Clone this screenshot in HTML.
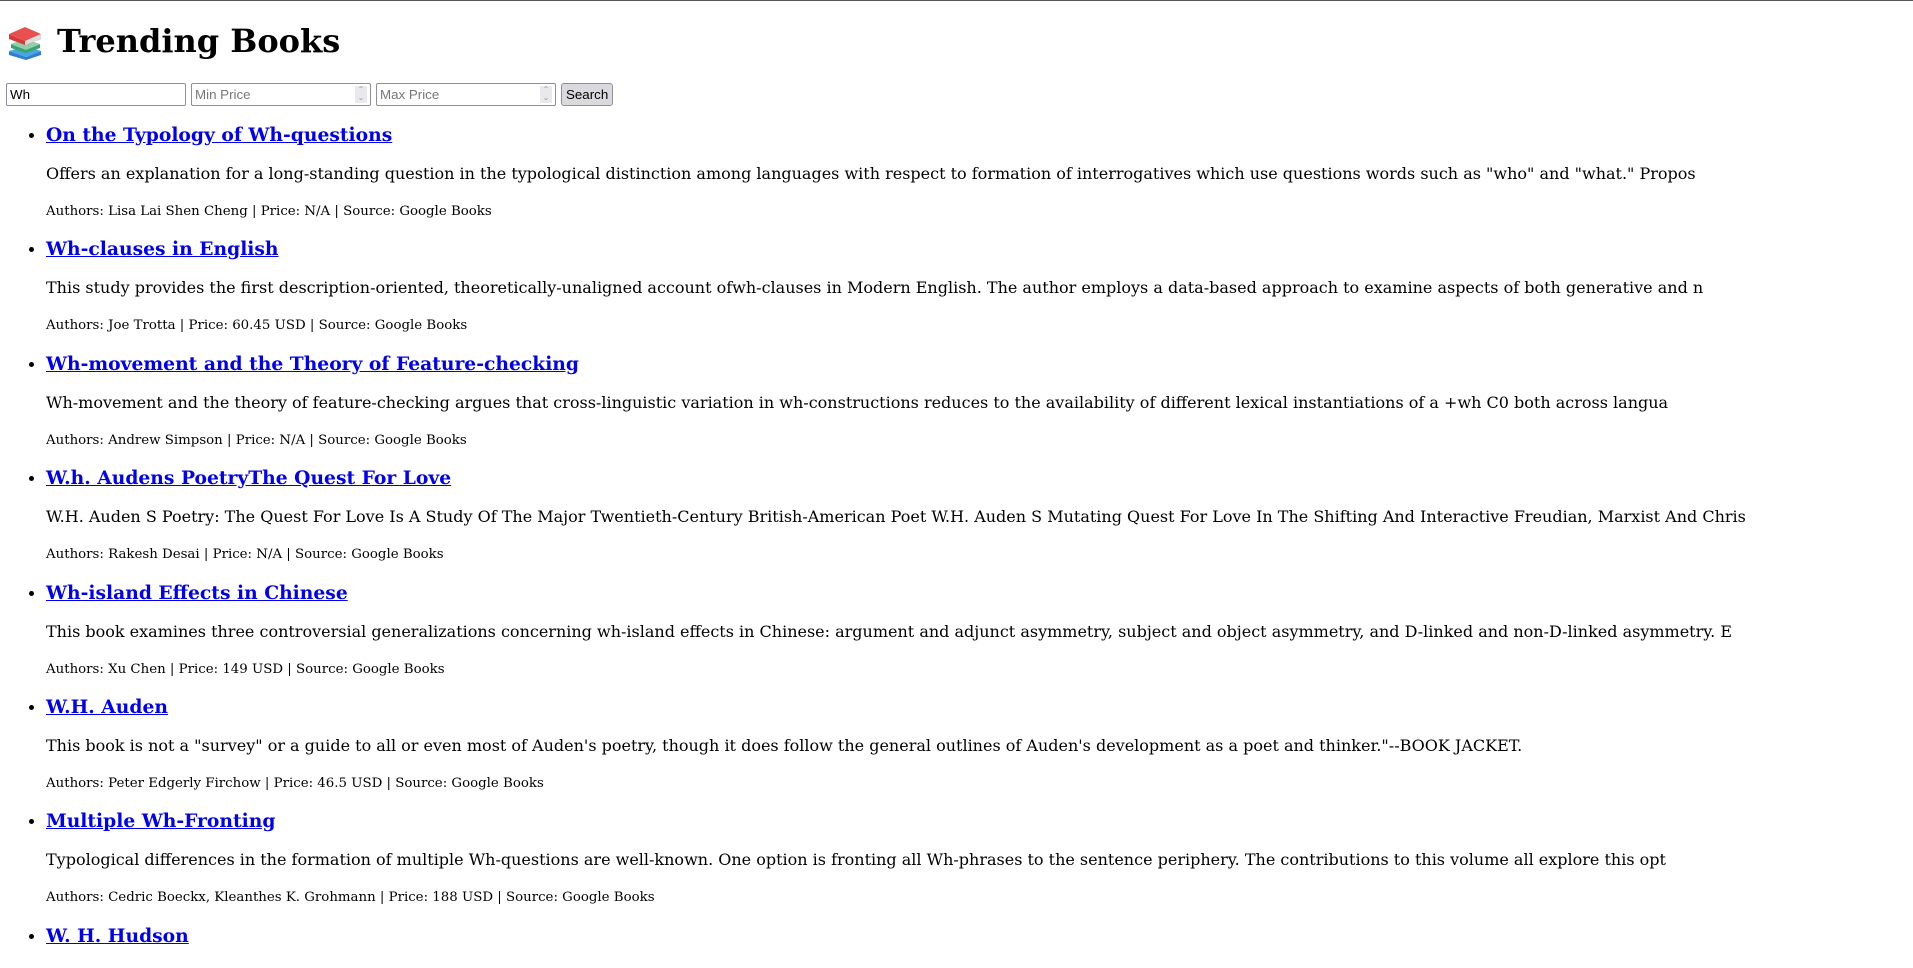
<!DOCTYPE html>
<html><head><meta charset="utf-8"><style>
html,body{margin:0;padding:0;background:#fff;}
body{width:1913px;height:968px;overflow:hidden;border-top:1px solid #555;box-sizing:border-box;font-family:"DejaVu Serif","Liberation Serif",serif;color:#000;}
.hdr{position:absolute;left:6px;top:23px;height:37px;display:flex;align-items:center;}
.hdr svg{width:38px;height:36px;}
h1{margin:0 0 0 13px;font-size:32px;line-height:37px;font-weight:bold;}
.form{position:absolute;top:83px;left:6px;display:flex;font-family:"Liberation Sans","DejaVu Sans",sans-serif;font-size:13.33px;}
.inp{box-sizing:border-box;height:23px;border:1px solid #8f8f9d;border-radius:2px;width:180px;margin-right:5px;padding:3px 3px 2px;line-height:16px;position:relative;color:#000;}
.ph{color:#777;}
.spin{position:absolute;right:3px;top:2px;width:12px;height:17px;background:#e9e9ed;color:#999;font-size:8px;line-height:8px;text-align:center;}
.btn{box-sizing:border-box;height:23px;border:1px solid #8f8f9d;border-radius:3px;background:#d9d9de;padding:3px 4px 2px;line-height:16px;}
ul{position:absolute;top:124px;left:0;margin:0;padding:0 0 0 46px;list-style:disc;}
li{margin:0;}
li::marker{font-size:17px;}
h3{margin:0 0 18px;font-size:18.72px;line-height:22px;font-weight:bold;}
h3 a{color:#0000ee;text-decoration:underline;}
p.d{margin:0 0 21px;font-size:16px;line-height:19px;white-space:nowrap;}
p.a{margin:0 0 18.4px;font-size:13.33px;line-height:16px;}
</style></head><body>
<div class="hdr"><svg viewBox="0 0 38 36">
<path d="M3 27 L20 33 L35 27 L35 31 L20 36 L3 31Z" fill="#2f7fc8"/>
<path d="M3 27 L20 33 L35 27 L20 22Z" fill="#4aa3e8"/>
<path d="M5 20 L20 26 L34 20 L34 24 L20 29 L5 24Z" fill="#3aa56a"/>
<path d="M5 20 L20 26 L34 20 L19 15Z" fill="#8fd0a8"/>
<path d="M3 10 L19 17 L35 10 L35 15 L19 21 L3 15Z" fill="#d63a3a"/>
<path d="M3 10 L19 17 L35 10 L19 3Z" fill="#e85050"/>
<path d="M19 17 L35 10 L35 15 L19 21Z" fill="#ddd"/>
</svg><h1>Trending Books</h1></div>
<div class="form">
<div class="inp">Wh</div>
<div class="inp"><span class="ph">Min Price</span><div class="spin">⌃<br>⌄</div></div>
<div class="inp"><span class="ph">Max Price</span><div class="spin">⌃<br>⌄</div></div>
<div class="btn">Search</div>
</div>
<ul>
<li><h3><a>On the Typology of Wh-questions</a></h3><p class="d">Offers an explanation for a long-standing question in the typological distinction among languages with respect to formation of interrogatives which use questions words such as "who" and "what." Propos</p><p class="a">Authors: Lisa Lai Shen Cheng | Price: N/A | Source: Google Books</p></li>
<li><h3><a>Wh-clauses in English</a></h3><p class="d">This study provides the first description-oriented, theoretically-unaligned account ofwh-clauses in Modern English. The author employs a data-based approach to examine aspects of both generative and n</p><p class="a">Authors: Joe Trotta | Price: 60.45 USD | Source: Google Books</p></li>
<li><h3><a>Wh-movement and the Theory of Feature-checking</a></h3><p class="d">Wh-movement and the theory of feature-checking argues that cross-linguistic variation in wh-constructions reduces to the availability of different lexical instantiations of a +wh C0 both across langua</p><p class="a">Authors: Andrew Simpson | Price: N/A | Source: Google Books</p></li>
<li><h3><a>W.h. Audens PoetryThe Quest For Love</a></h3><p class="d">W.H. Auden S Poetry: The Quest For Love Is A Study Of The Major Twentieth-Century British-American Poet W.H. Auden S Mutating Quest For Love In The Shifting And Interactive Freudian, Marxist And Chris</p><p class="a">Authors: Rakesh Desai | Price: N/A | Source: Google Books</p></li>
<li><h3><a>Wh-island Effects in Chinese</a></h3><p class="d">This book examines three controversial generalizations concerning wh-island effects in Chinese: argument and adjunct asymmetry, subject and object asymmetry, and D-linked and non-D-linked asymmetry. E</p><p class="a">Authors: Xu Chen | Price: 149 USD | Source: Google Books</p></li>
<li><h3><a>W.H. Auden</a></h3><p class="d">This book is not a "survey" or a guide to all or even most of Auden's poetry, though it does follow the general outlines of Auden's development as a poet and thinker."--BOOK JACKET.</p><p class="a">Authors: Peter Edgerly Firchow | Price: 46.5 USD | Source: Google Books</p></li>
<li><h3><a>Multiple Wh-Fronting</a></h3><p class="d">Typological differences in the formation of multiple Wh-questions are well-known. One option is fronting all Wh-phrases to the sentence periphery. The contributions to this volume all explore this opt</p><p class="a">Authors: Cedric Boeckx, Kleanthes K. Grohmann | Price: 188 USD | Source: Google Books</p></li>
<li><h3><a>W. H. Hudson</a></h3></li>
</ul>
</body></html>
